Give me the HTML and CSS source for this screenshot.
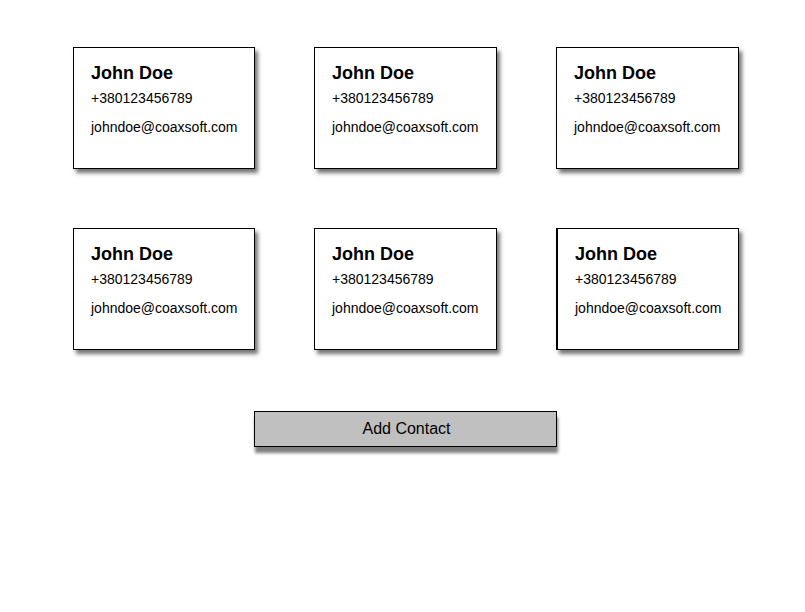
FILE: index.html
```html
<!DOCTYPE html>
<html>
<head>
<meta charset="utf-8">
<link rel="stylesheet" href="styles.css">
</head>
<body>
<div class="page">
  <div class="grid">
    <div class="card"><div class="name">John Doe</div><div class="phone">+380123456789</div><div class="email">johndoe@coaxsoft.com</div></div>
    <div class="card"><div class="name">John Doe</div><div class="phone">+380123456789</div><div class="email">johndoe@coaxsoft.com</div></div>
    <div class="card"><div class="name">John Doe</div><div class="phone">+380123456789</div><div class="email">johndoe@coaxsoft.com</div></div>
    <div class="card"><div class="name">John Doe</div><div class="phone">+380123456789</div><div class="email">johndoe@coaxsoft.com</div></div>
    <div class="card"><div class="name">John Doe</div><div class="phone">+380123456789</div><div class="email">johndoe@coaxsoft.com</div></div>
    <div class="card card-thick"><div class="name">John Doe</div><div class="phone">+380123456789</div><div class="email">johndoe@coaxsoft.com</div></div>
  </div>
  <div class="actions">
    <button class="add-btn" type="button">Add Contact</button>
  </div>
</div>
</body>
</html>
```
FILE: styles.css
```css
html, body {
  margin: 0;
  padding: 0;
  background: #fff;
}
body {
  font-family: "Liberation Sans", Arial, sans-serif;
  color: #000;
  min-height: 612px;
}
.page {
  padding: 47px 0 60px 73px;
  width: 665px;
}
.grid {
  display: grid;
  grid-template-columns: 182px 183px 183px;
  column-gap: 59px;
  row-gap: 59px;
}
.card {
  box-sizing: border-box;
  height: 122px;
  border: 1px solid #000;
  background: #fff;
  padding: 15px 17px 0 17px;
  box-shadow: 3px 4px 4px rgba(0, 0, 0, 0.55);
}
.card-thick {
  border-left-width: 2px;
}
.name {
  font-size: 18px;
  font-weight: bold;
  line-height: 21px;
  margin-bottom: 6px;
}
.phone {
  font-size: 14px;
  line-height: 16px;
  margin-bottom: 13px;
}
.email {
  font-size: 14px;
  line-height: 16px;
}
.actions {
  display: flex;
  justify-content: center;
  margin-top: 61px;
}
.add-btn {
  -webkit-appearance: none;
  appearance: none;
  box-sizing: border-box;
  width: 303px;
  height: 36px;
  border: 1px solid #000;
  border-radius: 0;
  background: #c0c0c0;
  font-family: "Liberation Sans", Arial, sans-serif;
  font-size: 16px;
  color: #000;
  padding: 0 0 0 2px;
  cursor: pointer;
  box-shadow: 1px 6px 3px rgba(0, 0, 0, 0.5);
}
```
